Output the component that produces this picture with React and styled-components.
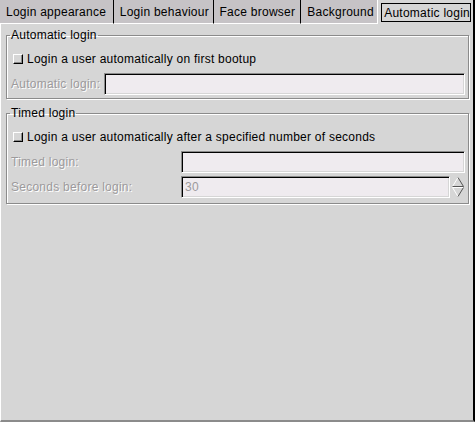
import React from 'react';
import styled, { createGlobalStyle } from 'styled-components';

const GlobalStyle = createGlobalStyle`
  html, body {
    margin: 0;
    padding: 0;
    background: #d6d6d6;
  }
  body {
    font-family: "Liberation Sans", Arial, sans-serif;
    font-size: 12px;
    color: #000;
  }
`

const Window = styled.div`
  width: 475px;
  height: 422px;
  display: flex;
  flex-direction: column;
  background: #d6d6d6;
  overflow: hidden;
`

const TabBar = styled.div`
  display: flex;
  height: 24px;
  flex: none;
`

const Tab = styled.div`
  box-sizing: border-box;
  height: 24px;
  width: ${(p) => p.$width}px;
  display: flex;
  align-items: center;
  padding-left: 6px;
  background: #c6c3c6;
  border-right: ${(p) => (p.$last ? 'none' : '1px solid #000')};
  border-bottom: 1px solid #fff;
  white-space: nowrap;
  letter-spacing: 0.25px;
`

const ActiveTab = styled.div`
  box-sizing: border-box;
  flex: 1;
  height: 24px;
  display: flex;
  align-items: center;
  padding: 3px 2px 2px 3px;
  background: #d6d6d6;
  border-left: 1px solid #fff;
  border-right: 2px solid #000;
`

const FocusLabel = styled.div`
  box-sizing: border-box;
  flex: 1;
  height: 19px;
  border: 1px solid #000;
  display: flex;
  align-items: center;
  padding-left: 2px;
  white-space: nowrap;
  letter-spacing: 0.25px;
`

const Page = styled.div`
  box-sizing: border-box;
  flex: 1;
  display: flex;
  flex-direction: column;
  gap: 8px;
  padding: 5px 4px 0 5px;
  border-left: 1px solid #fff;
  border-right: 2px solid #000;
  border-bottom: 2px solid #8b8b8b;
`

const Frame = styled.fieldset`
  box-sizing: border-box;
  margin: 0;
  padding: ${(p) => p.$pad};
  border: 1px solid #8b8b8b;
  box-shadow: inset 1px 1px 0 #fff, 1px 1px 0 #fff;
  min-width: 0;
`

const Legend = styled.legend`
  padding: 0 1px;
  margin-left: -1px;
  font-size: 12px;
  letter-spacing: 0.25px;
  line-height: 12px;
`

const Row = styled.div`
  display: flex;
  align-items: center;
  height: ${(p) => p.$h || 24}px;
`

const Check = styled.span`
  box-sizing: border-box;
  width: 10px;
  height: 10px;
  margin: 0 4px 0 2px;
  flex: none;
  background: #d6d6d6;
  border-top: 1px solid #fff;
  border-left: 1px solid #fff;
  border-right: 1px solid #000;
  border-bottom: 1px solid #000;
  box-shadow: inset -1px -1px 0 #8b8b8b;
`

const CheckText = styled.span`
  letter-spacing: 0.25px;
  white-space: nowrap;
`

const Label = styled.span`
  width: ${(p) => p.$width}px;
  flex: none;
  color: #9c9a9c;
  text-shadow: 1px 1px 0 #fff;
  letter-spacing: 0.25px;
  white-space: nowrap;
`

const Input = styled.div`
  box-sizing: border-box;
  flex: 1;
  height: 22px;
  background: #efebef;
  border-top: 1px solid #8b8b8b;
  border-left: 1px solid #8b8b8b;
  border-right: 1px solid #fff;
  border-bottom: 1px solid #fff;
  box-shadow: inset 1px 1px 0 #000, inset -1px -1px 0 #d6d6d6;
  color: #9c9a9c;
  display: flex;
  align-items: center;
  padding-left: 3px;
  letter-spacing: 0.25px;
`

const Spin = styled.div`
  flex: 1;
  display: flex;
  align-items: center;
  gap: 1px;
`

const SpinArrows = () => (
  <svg width="14" height="22" viewBox="0 0 14 22">
    <path d="M7 1.5 L1.5 10.5" stroke="#fff" fill="none" />
    <path d="M7 1.5 L12.5 10.5 L1.5 10.5" stroke="#555" fill="none" />
    <path d="M1.5 11.5 L12.5 11.5" stroke="#fff" fill="none" />
    <path d="M1.5 11.5 L7 20.5" stroke="#fff" fill="none" />
    <path d="M12.5 11.5 L7 20.5" stroke="#555" fill="none" />
  </svg>
)

const tabs = [
  { name: 'Login appearance', width: 114 },
  { name: 'Login behaviour', width: 100 },
  { name: 'Face browser', width: 88 },
  { name: 'Background', width: 76, last: true },
];

export default function App() {
  return (
    <Window>
      <GlobalStyle />
      <TabBar>
        {tabs.map((t) => (
          <Tab key={t.name} $width={t.width} $last={t.last}>{t.name}</Tab>
        ))}
        <ActiveTab>
          <FocusLabel>Automatic login</FocusLabel>
        </ActiveTab>
      </TabBar>
      <Page>
        <Frame $pad="5px 3px 2px 4px">
          <Legend>Automatic login</Legend>
          <Row $h={26}>
            <Check />
            <CheckText>Login a user automatically on first bootup</CheckText>
          </Row>
          <Row $h={24}>
            <Label $width={93}>Automatic login:</Label>
            <Input />
          </Row>
        </Frame>
        <Frame $pad="4px 3px 3px 4px">
          <Legend>Timed login</Legend>
          <Row $h={27}>
            <Check />
            <CheckText>Login a user automatically after a specified number of seconds</CheckText>
          </Row>
          <Row $h={23}>
            <Label $width={170}>Timed login:</Label>
            <Input />
          </Row>
          <Row $h={27}>
            <Label $width={170}>Seconds before login:</Label>
            <Spin>
              <Input>30</Input>
              <SpinArrows />
            </Spin>
          </Row>
        </Frame>
      </Page>
    </Window>
  );
}
